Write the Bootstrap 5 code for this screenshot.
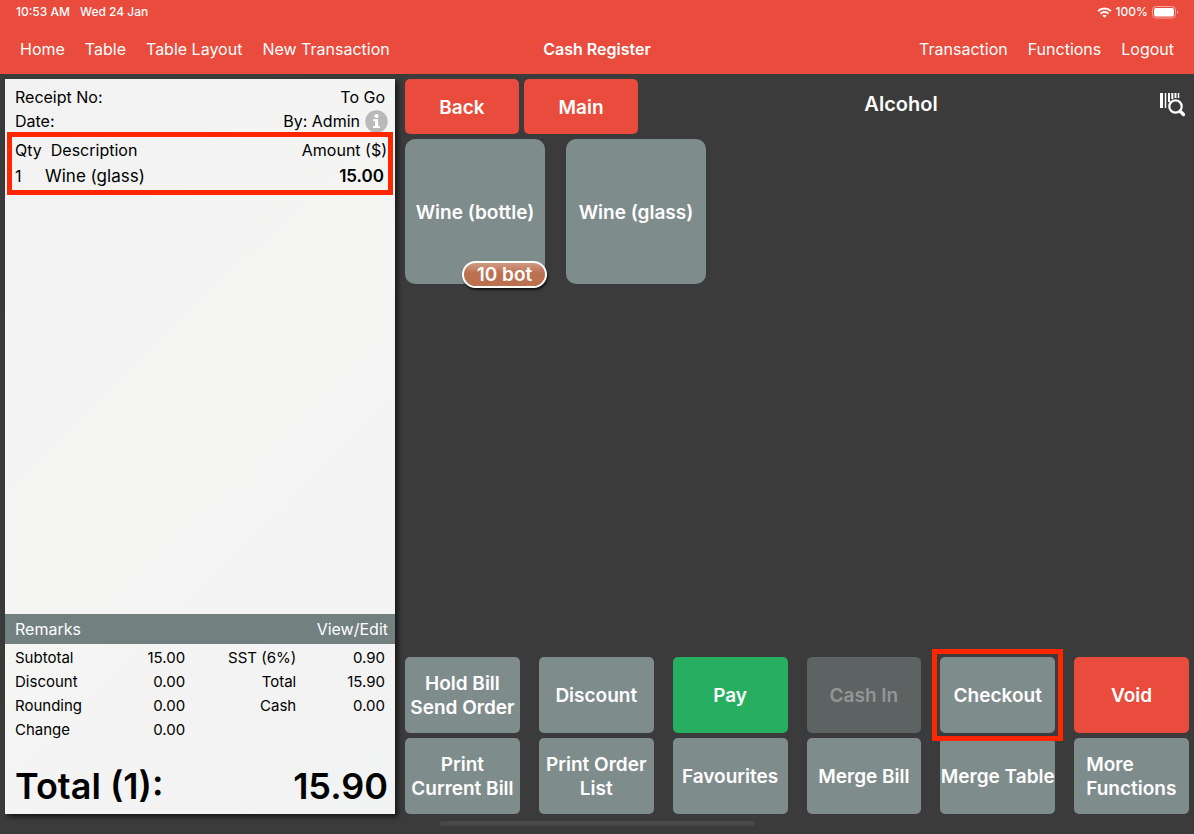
<!DOCTYPE html>
<html lang="en">
<head>
<meta charset="utf-8">
<meta name="viewport" content="width=device-width, initial-scale=1">
<title>Cash Register</title>
<link href="https://cdn.jsdelivr.net/npm/bootstrap@5.3.0/dist/css/bootstrap.min.css" rel="stylesheet">
<style>
  :root { --red: #e94b3c; --slate: #7f8c8c; --dark: #3b3b3b; --mark: #ff2600; }
  body { background: var(--dark); font-family: Inter, "Liberation Sans", sans-serif; color: #000; line-height: 24px; }
  .topbar { background: var(--red); color: #fff; height: 74px; }
  .status { font-size: 12px; font-weight: 500; height: 24px; padding: 0 15px 0 16px; }
  .status-time { gap: 10px; }
  .menubar { height: 50px; padding: 0 20px; font-size: 16px; }
  .menubar a { color: #fff; text-decoration: none; }
  .side { flex: 1 1 0; gap: 20px; }
  .title { font-size: 16px; font-weight: 600; }

  .workspace { padding: 5px 5px 20px; gap: 10px; }
  .receipt { width: calc(33% - 1px); min-width: 390px; background: linear-gradient(135deg, #f2f2f2, #f5f5f4 50%, #f1f2f2); box-shadow: 3px 3px 5px rgba(0,0,0,.6); font-size: 16px; }
  .meta { padding: 6px 10px 0; height: 53px; }
  .cashier { gap: 5px; margin-right: -3px; }
  .items-box { border: 5px solid var(--mark); margin: 0 2px; padding: 1px 1px 0 3px; height: 63px; }
  .items-box table, .sums { width: 100%; border-collapse: collapse; }
  .items-box th { font-weight: 400; padding: 0; height: 24px; }
  .items-box td { padding: 0 3px 0 0; height: 27px; }
  .items-box .item-name { font-size: 17px; }
  .remarks { background: #728080; color: #fff; height: 30px; padding: 0 7px 0 10px; }
  .remarks a { color: #fff; text-decoration: none; }
  .sums { table-layout: fixed; font-size: 15px; }
  .sums th { font-weight: 400; padding: 0; }
  .sums td { padding: 0; text-align: right; }
  .sums-box { padding: 2px 10px 0; height: 114px; }
  .grand { padding: 0 7px 0 10px; height: 56px; font-size: 36px; font-weight: 600; }

  .key { border: 0; border-radius: 5px; background: var(--slate); color: #fff; font-size: 19px; font-weight: 600; line-height: 24px; padding: 2px 0 0; }
  .key-red { background: var(--red); }
  .key-green { background: #27ae60; }
  .key:disabled { background: #5d6263; color: #949595; }
  .key-more { padding-left: 12px; text-align: left; }
  .nav-row { gap: 5px; margin-bottom: 5px; }
  .nav-key { width: 114px; height: 55px; }
  .heading-bar { height: 50px; }
  .heading { font-size: 20px; font-weight: 600; margin: 0; }
  .products { gap: 21px; }
  .product { width: 140px; height: 145px; border-radius: 10px; }
  .stock { position: absolute; right: -2px; bottom: -4px; width: 85px; height: 27px; border: 2px solid #fff; border-radius: 14px; background: linear-gradient(#cf9a84, #bb7050 45%, #bb7050); font-size: 19px; line-height: 23px; text-align: center; box-shadow: 1px 2px 2px rgba(0,0,0,.7); }
  .pad { display: grid; grid-template-columns: repeat(6, minmax(0, 1fr)); gap: 5px 19px; grid-auto-rows: 76px; }
  .ring { position: absolute; inset: -8px; border: 5px solid var(--mark); pointer-events: none; z-index: 1; }
  .home-bar { position: fixed; bottom: 8px; left: 50%; width: 315px; height: 5px; margin-left: -157px; border-radius: 3px; background: #484848; }
</style>
</head>
<body class="d-flex flex-column min-vh-100">
  <header class="topbar">
    <div class="status d-flex justify-content-between align-items-center">
      <div class="status-time d-flex"><span>10:53 AM</span><span>Wed 24 Jan</span></div>
      <div class="d-flex align-items-center gap-1">
        <svg width="15" height="11" viewBox="0 0 15 11" fill="none" stroke="#fff" stroke-width="2"><path d="M1 4.1a9.2 9.2 0 0 1 13 0M3.5 6.7a5.6 5.6 0 0 1 8 0"/><path d="M7.5 10.8 5.4 8.7a3 3 0 0 1 4.2 0z" fill="#fff" stroke="none"/></svg>
        <span>100%</span>
        <svg width="27" height="13" viewBox="0 0 27 13"><rect x=".5" y=".5" width="23" height="11.500" rx="3.500" fill="none" stroke="#fff" stroke-opacity=".5"/><rect x="2" y="2" width="20" height="8.500" rx="2" fill="#fff"/><path d="M25 4.500c1.700.5 1.700 3 0 3.500z" fill="#fff" fill-opacity=".5"/></svg>
      </div>
    </div>
    <nav class="menubar d-flex align-items-center">
      <div class="side d-flex"><a href="#">Home</a><a href="#">Table</a><a href="#">Table Layout</a><a href="#">New Transaction</a></div>
      <span class="title">Cash Register</span>
      <div class="side d-flex justify-content-end"><a href="#">Transaction</a><a href="#">Functions</a><a href="#">Logout</a></div>
    </nav>
  </header>

  <main class="workspace d-flex flex-grow-1">
    <section class="receipt d-flex flex-column flex-shrink-0">
      <div class="meta">
        <div class="d-flex justify-content-between"><span>Receipt No:</span><span>To Go</span></div>
        <div class="d-flex justify-content-between"><span>Date:</span>
          <span class="cashier d-flex align-items-center">By: Admin
            <svg width="23" height="23" viewBox="0 0 23 23"><circle cx="11.500" cy="11.500" r="11.200" fill="#b9b9b9"/><circle cx="11.500" cy="6" r="2.100" fill="#fff"/><path d="M8 9.300h5.200v7h1.800v1.700H8v-1.700h1.900v-5.300H8z" fill="#fff"/></svg>
          </span>
        </div>
      </div>
      <div class="items-box">
        <table>
          <thead><tr><th scope="col" colspan="2">Qty&nbsp; Description</th><th class="text-end" scope="col">Amount ($)</th></tr></thead>
          <tbody><tr><td width="30">1</td><td class="item-name">Wine (glass)</td><td class="item-name text-end fw-semibold">15.00</td></tr></tbody>
        </table>
      </div>
      <div class="flex-grow-1"></div>
      <div class="remarks d-flex justify-content-between align-items-center"><span>Remarks</span><a href="#">View/Edit</a></div>
      <div class="sums-box">
        <table class="sums">
          <colgroup><col style="width:24%"><col style="width:22%"><col style="width:30%"><col style="width:24%"></colgroup>
          <tbody>
            <tr><th scope="row">Subtotal</th><td>15.00</td><th class="text-end" scope="row">SST (6%)</th><td>0.90</td></tr>
            <tr><th scope="row">Discount</th><td>0.00</td><th class="text-end" scope="row">Total</th><td>15.90</td></tr>
            <tr><th scope="row">Rounding</th><td>0.00</td><th class="text-end" scope="row">Cash</th><td>0.00</td></tr>
            <tr><th scope="row">Change</th><td>0.00</td><td></td><td></td></tr>
          </tbody>
        </table>
      </div>
      <div class="grand d-flex justify-content-between align-items-center"><span>Total (1):</span><span>15.90</span></div>
    </section>

    <section class="d-flex flex-column flex-grow-1">
      <div class="nav-row d-flex align-items-start">
        <button type="button" class="key key-red nav-key">Back</button>
        <button type="button" class="key key-red nav-key">Main</button>
        <div class="heading-bar d-flex align-items-center flex-grow-1">
          <h1 class="heading flex-grow-1 text-center text-white">Alcohol</h1>
          <button type="button" class="btn p-0 border-0 me-1" aria-label="Search barcode">
            <svg width="26" height="26" viewBox="0 0 26 26" fill="none" stroke="#fff"><path d="M2.500 2v15" stroke-width="3"/><path d="M6.500 2v15M19.500 2v5" stroke-width="1.500"/><path d="M10 2v9M13.300 2v6M16.500 2v5" stroke-width="2"/><circle cx="16.500" cy="15.500" r="6.200" stroke-width="2.200"/><path d="m21.200 20.200 3.300 3.300" stroke-width="3.400" stroke-linecap="round"/></svg>
          </button>
        </div>
      </div>
      <div class="products d-flex">
        <button type="button" class="key product position-relative">Wine (bottle)<span class="stock">10 bot</span></button>
        <button type="button" class="key product">Wine (glass)</button>
      </div>
      <div class="pad mt-auto">
        <button type="button" class="key">Hold Bill<br>Send Order</button>
        <button type="button" class="key">Discount</button>
        <button type="button" class="key key-green">Pay</button>
        <button type="button" class="key" disabled>Cash In</button>
        <button type="button" class="key position-relative">Checkout<span class="ring"></span></button>
        <button type="button" class="key key-red">Void</button>
        <button type="button" class="key">Print<br>Current Bill</button>
        <button type="button" class="key">Print Order<br>List</button>
        <button type="button" class="key">Favourites</button>
        <button type="button" class="key">Merge Bill</button>
        <button type="button" class="key text-nowrap">Merge Table</button>
        <button type="button" class="key key-more">More<br>Functions</button>
      </div>
    </section>
  </main>
  <div class="home-bar"></div>
  <script src="https://cdn.jsdelivr.net/npm/bootstrap@5.3.0/dist/js/bootstrap.bundle.min.js"></script>
</body>
</html>
